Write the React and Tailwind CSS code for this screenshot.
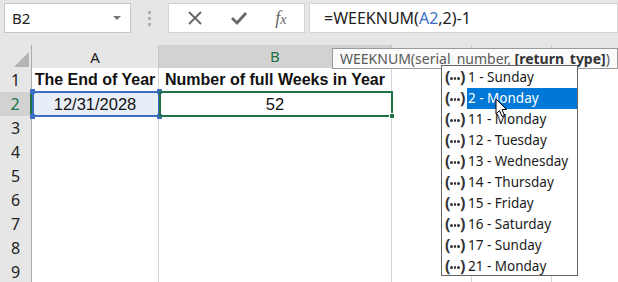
import React from "react";

const rows = [
  { n: 1, a: "The End of Year", b: "Number of full Weeks in Year", bold: true },
  { n: 2, a: "12/31/2028", b: "52" },
  { n: 3 },
  { n: 4 },
  { n: 5 },
  { n: 6 },
  { n: 7 },
  { n: 8 },
  { n: 9 },
];

const options = [
  "1 - Sunday",
  "2 - Monday",
  "11 - Monday",
  "12 - Tuesday",
  "13 - Wednesday",
  "14 - Thursday",
  "15 - Friday",
  "16 - Saturday",
  "17 - Sunday",
  "21 - Monday",
];

const cols = "grid grid-cols-[32px_127px_233px_80px_80px_80px]";

const ArgIcon = () => (
  <span className="flex items-center w-[22px] h-full text-[#333] font-bold text-[16px] leading-none font-['Noto_Sans',sans-serif]">
    <span className="-mt-[2px]">(</span>
    <span className="flex gap-[1px] mt-[2px]">
      <span className="w-[2.5px] h-[2.5px] bg-[#333] rounded-full" />
      <span className="w-[2.5px] h-[2.5px] bg-[#333] rounded-full" />
      <span className="w-[2.5px] h-[2.5px] bg-[#333] rounded-full" />
    </span>
    <span className="-mt-[2px]">)</span>
  </span>
);

export default function App() {
  return (
    <div className="relative w-[618px] h-[282px] overflow-hidden bg-[#e6e6e6] font-['Noto_Sans',sans-serif]">
      {/* formula bar */}
      <div className="h-[45px] flex items-start pt-[3px] pl-[4px]">
        <div className="w-[127px] h-[30px] bg-white border border-[#c6c6c6] flex items-center justify-between pl-[7px] pr-[9px]">
          <span className="text-[15px] text-[#222]">B2</span>
          <span className="w-0 h-0 border-l-[4px] border-r-[4px] border-t-[4px] border-l-transparent border-r-transparent border-t-[#777]" />
        </div>
        <div className="w-[37px] h-[30px] flex flex-col items-center justify-center gap-[3px]">
          <span className="w-[3px] h-[3px] bg-[#b0b0b0]" />
          <span className="w-[3px] h-[3px] bg-[#b0b0b0]" />
          <span className="w-[3px] h-[3px] bg-[#b0b0b0]" />
        </div>
        <div className="w-[137px] h-[30px] bg-white border border-[#d4d4d4] flex items-center justify-around px-[4px] text-[#666]">
          <svg width="16" height="16" viewBox="0 0 16 16">
            <path d="M2 2 L14 14 M14 2 L2 14" stroke="#666" strokeWidth="1.8" fill="none" />
          </svg>
          <svg width="18" height="16" viewBox="0 0 18 16">
            <path d="M2 8 L7 13 L16 3" stroke="#666" strokeWidth="2.8" fill="none" />
          </svg>
          <span className="font-['Liberation_Serif',serif] italic text-[18px] leading-none">
            f<span className="text-[14px]">x</span>
          </span>
        </div>
        <div className="flex-1 ml-[4px] h-[30px] bg-white border border-[#d4d4d4] flex items-center pl-[14px] text-[16px] text-[#222]">
          <span>
            =WEEKNUM(<span className="text-[#3a6fc4]">A2</span>,2)-1
          </span>
        </div>
      </div>

      {/* sheet */}
      <div className="relative">
        <div className={`${cols} h-[23px] text-[15px]`}>
          <div className="border-r border-b border-[#ababab] bg-[#e6e6e6] flex items-end justify-end p-[2px]">
            <svg width="15" height="15" viewBox="0 0 15 15">
              <path d="M15 0 L15 15 L0 15 Z" fill="#b4b4b4" />
            </svg>
          </div>
          <div className="border-r border-b border-r-[#c6c6c6] border-b-[#ababab] flex items-center justify-center text-[#222]">A</div>
          <div className="border-r border-r-[#c6c6c6] border-b-2 border-b-[#217346] bg-[#d2d2d2] flex items-center justify-center text-[#217346]">B</div>
          {/* C, D, E headers sit under the function tooltip */}
          <div className="border-r border-b border-r-[#c6c6c6] border-b-[#ababab]" />
          <div className="border-r border-b border-r-[#c6c6c6] border-b-[#ababab]" />
          <div className="border-r border-b border-r-[#c6c6c6] border-b-[#ababab]" />
        </div>
        {rows.map((r) => (
          <div key={r.n} className={`${cols} h-[24px] text-[#111]`}>
            <div
              className={`border-b border-b-[#c6c6c6] flex items-center justify-center text-[16px] ${
                r.n === 2
                  ? "bg-[#d2d2d2] text-[#217346] border-r-2 border-r-[#217346]"
                  : "bg-[#e6e6e6] text-[#222] border-r border-r-[#ababab]"
              }`}
            >
              {r.n}
            </div>
            <div
              className={`border-r border-b border-[#d4d4d4] flex items-center justify-center whitespace-nowrap overflow-hidden font-['Liberation_Sans',sans-serif] ${
                r.n === 2 ? "bg-[#e8eef8] text-[16.5px]" : "bg-white text-[16px]"
              } ${r.bold ? "font-bold" : ""}`}
            >
              {r.a}
            </div>
            <div
              className={`border-r border-b border-[#d4d4d4] bg-white flex items-center justify-center whitespace-nowrap overflow-hidden font-['Liberation_Sans',sans-serif] ${
                r.bold ? "font-bold text-[16px]" : "text-[16.5px]"
              }`}
            >
              {r.b}
            </div>
            <div className="border-r border-b border-[#d4d4d4] bg-white" />
            <div className="border-r border-b border-[#d4d4d4] bg-white" />
            <div className="border-r border-b border-[#d4d4d4] bg-white" />
          </div>
        ))}

        {/* A2 reference highlight */}
        <div className="absolute left-[32px] top-[46px] w-[128px] h-[26px] border-2 border-[#3a6fc4]">
          <span className="absolute left-[-4px] top-[-4px] w-[5px] h-[5px] bg-[#3a6fc4]" />
          <span className="absolute right-[-4px] top-[-4px] w-[5px] h-[5px] bg-[#3a6fc4]" />
          <span className="absolute left-[-4px] bottom-[-4px] w-[5px] h-[5px] bg-[#3a6fc4]" />
          <span className="absolute right-[-4px] bottom-[-4px] w-[5px] h-[5px] bg-[#3a6fc4]" />
        </div>
        {/* B2 active cell */}
        <div className="absolute left-[159px] top-[46px] w-[234px] h-[26px] border-2 border-[#217346]">
          <span className="absolute right-[-4px] bottom-[-4px] w-[6px] h-[6px] bg-[#217346] border border-white" />
        </div>
      </div>

      {/* function tooltip */}
      <div className="absolute left-[332px] top-[48px] w-[286px] h-[21px] bg-[#fafafa] border border-[#9a9a9a] flex items-center pl-[7px] text-[14px] leading-[15px] text-[#595959] whitespace-nowrap">
        <span>
          WEEKNUM(serial_number, <span className="font-bold text-[#333]">[return_type]</span>)
        </span>
      </div>

      {/* argument list */}
      <div className="absolute left-[441px] top-[65px] w-[137px] h-[211px] bg-white border border-[#646464] pt-[1px] text-[13.5px] text-[#1a1a1a]">
        {options.map((o, i) => (
          <div key={o} className="h-[21px] flex items-center pl-[3px]">
            <ArgIcon />
            <div
              className={`flex-1 h-full flex items-center pl-[1px] whitespace-nowrap ${
                i === 1 ? "bg-[#0078d7] text-white" : ""
              }`}
            >
              {o}
            </div>
          </div>
        ))}
      </div>

      {/* mouse pointer */}
      <svg className="absolute left-[495px] top-[98px]" width="13" height="21" viewBox="0 0 13 21">
        <path d="M1 1 L1 16 L4.5 12.5 L7 18.5 L9.5 17.5 L7 11.5 L11.5 11.5 Z" fill="white" stroke="black" strokeWidth="1" />
      </svg>
    </div>
  );
}
